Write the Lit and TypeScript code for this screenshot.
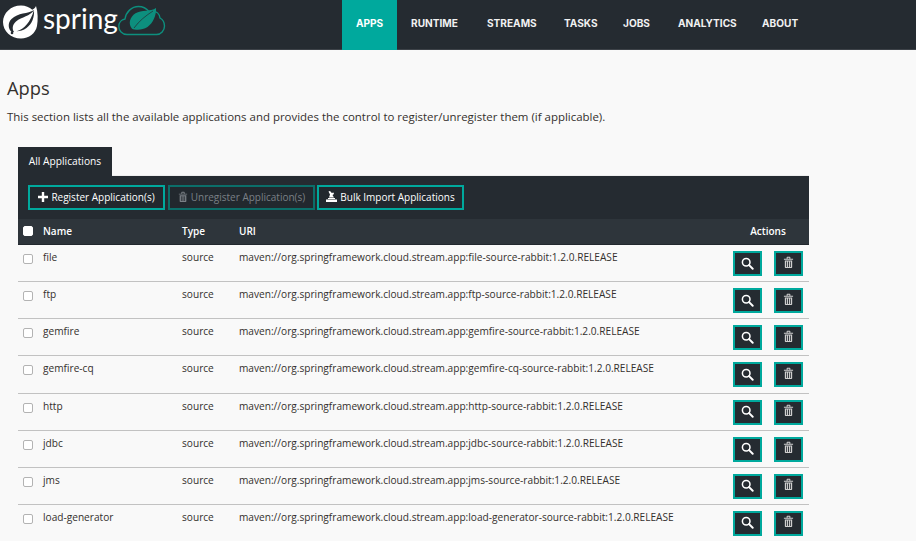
import { LitElement, html, css, svg } from "lit";
import { customElement } from "lit/decorators.js";

const NAV = ["APPS", "RUNTIME", "STREAMS", "TASKS", "JOBS", "ANALYTICS", "ABOUT"];
const ROWS = ["file", "ftp", "gemfire", "gemfire-cq", "http", "jdbc", "jms", "load-generator"];

const trash = svg`<path d="M1 3h10v1.100H1zM4 3V1.400C4 1 4.300.8 4.700.8h2.600c.4 0 .7.2.7.6V3H7V1.800H5V3zM2 4.800h8v7.400c0 .5-.3.8-.8.8H2.800c-.5 0-.8-.3-.8-.8zm1.500 1.200v5.800h.9V6zm2 0v5.800h1V6zm2.100 0v5.800h.9V6z" fill="currentColor" fill-rule="evenodd"/>`;

@customElement("app-root")
export class AppRoot extends LitElement {
  static styles = css`
    :host { display: block; height: 541px; overflow: hidden; background: #f9f9f9; color: #34302d; font-family: "Open Sans", "Noto Sans", sans-serif; }
    header { height: 50px; background: #252b31; display: flex; border-bottom: 1px solid #3d4248; box-sizing: border-box; }
    .logo { width: 342px; display: flex; align-items: flex-start; box-sizing: border-box; flex: none; }
    .logo-mark { flex: none; }
    .logo-text { color: #fff; font: 400 28px/30px "Lato", sans-serif; width: 75px; flex: none; margin-top: 3px; }
    .boot { flex: none; }
    nav { display: flex; gap: 28px; font: 700 10.100px/47px "Inter", sans-serif; color: #f1f1f1; }
    nav a { white-space: nowrap; }
    nav a.on { background: #00a99d; color: #fff; width: 55px; text-align: center; height: 50px; margin-right: -14px; }
    nav a:nth-child(2) { width: 48px; }
    nav a:nth-child(3) { width: 49px; }
    nav a:nth-child(4) { width: 31px; }
    nav a:nth-child(5) { width: 27px; }
    nav a:nth-child(6) { width: 56px; }
    main { padding: 28px 0 0 7px; }
    h1 { margin: 0; font-size: 18.300px; line-height: 20px; font-weight: 400; color: #34302d; }
    .desc { margin: 11px 0 0; font-size: 11.460px; line-height: 16px; color: #34302d; }
    .panel { margin: 22px 0 0 11px; width: 791px; }
    .tab { display: inline-block; width: 94px; height: 29px; background: #252b31; color: #fff; font-size: 10.200px; line-height: 28px; text-align: center; box-sizing: border-box; vertical-align: top; }
    .tabs { height: 29px; border-bottom: 1px solid #eee; box-sizing: border-box; }
    .bar { height: 43px; background: #252b31; display: flex; gap: 3px; padding: 9px 10px 0; box-sizing: border-box; }
    .btn { height: 25px; box-sizing: border-box; border: 2px solid #00a99d; background: #22282e; color: #fff; font-size: 10px; font-family: inherit; display: flex; align-items: center; justify-content: center; gap: 3px; padding: 0 0 2px; white-space: nowrap; }
    .btn.off { border-color: #0b6f6a; color: #7b8086; }
    .b1 { width: 137px; }
    .b2 { width: 147px; }
    .b3 { width: 147px; margin-left: -1px; }
    .row { display: grid; grid-template-columns: 25px 139px 57px 1fr 76px; align-items: start; box-sizing: border-box; }
    .head { height: 26px; background: #2e353b; color: #fff; font-size: 10px; font-weight: 600; line-height: 24px; border-bottom: 1px solid #22282e; }
    .head .act { text-align: center; padding-right: 6px; }
    .body { height: 37.140px; border-bottom: 1px solid #c2c2c2; font-size: 10.150px; line-height: 14px; color: #34302d; padding-top: 5px; }
    .body:last-child { border-bottom: none; }
    .cb { width: 8px; height: 8px; margin: 4px 0 0 5px; border: 1px solid #b3b3b3; border-radius: 2px; background: #fff; box-sizing: content-box; display: block; }
    .head .cb { margin-top: 7px; border-color: #fff; }
    .acts { display: flex; gap: 12px; margin-top: 1px; }
    .ic { width: 29px; height: 25px; box-sizing: border-box; border: 2px solid #00a99d; background: #252b31; display: flex; align-items: center; justify-content: center; color: #fff; padding: 0 0 1px; }
    .ic.del { color: #cfcfcf; padding-bottom: 3px; }
    .ic svg { display: block; }
    .boot-label { font: 700 3.800px "Liberation Sans", sans-serif; letter-spacing: 1.200px; fill: #252b31; }
  `;

  render() {
    return html`
      <header>
        <div class="logo">
          <svg class="logo-mark" width="43" height="42" viewBox="0 0 43 42">
            <path d="M36 6c-.8 1.800-2 3-3.700 3.800C29.500 7.300 25.500 5.500 21 5.500 11 5.500 3 13 3 22s8 16.500 18 16.500c8 0 14.500-5 16-12.500C38 20 38 12 36 6z" fill="#fff"/>
            <path d="M34 10C28 14 18 12.500 11.500 19 7.500 23 8 29 12 32.500l2 -.5C11.800 28.800 12.500 24.500 16 21.500 22 16.500 30 16.500 34 10z" fill="#252b31"/>
            <path d="M34 10c.5 7-2 14-7.500 18-3 2.200-6.500 3.200-10 3.200 8-1.700 14-9.500 17.500-21.200z" fill="#252b31"/>
            <circle cx="12" cy="33" r="1.300" fill="#252b31"/>
          </svg>
          <div class="logo-text">spring</div>
          <svg class="boot" width="48" height="38" viewBox="118 0 48 38">
            <path d="M127 34.500C122 34.500 118.800 30.500 118.800 26.500 118.800 22.500 121.500 19.500 125 19 126 12 131.500 6.500 138.500 6.500 143 6.500 146.500 8.500 149 11.500 150 11.100 151 11 152 11 156.500 11 159.500 14 160 18 162.800 19.500 164.500 22 164.500 26 164.500 30.500 161 34.500 156.500 34.500z" fill="none" stroke="#0d8f7e" stroke-width="1.400"/>
            <path d="M156 8c.5 7.500-3 15-8.500 19-5 3.400-12 3.200-15.500 1.800-4-4.800-2.500-11.500 3.500-15.500 6-3.800 15-1.300 20.500-5.300z" fill="#0d8f7e"/>
            <path d="M134 28C139 21 146 15.500 153 11" stroke="#252b31" stroke-width=".7" fill="none"/>
            <text class="boot-label" x="131" y="32.500">BOOT</text>
          </svg>
        </div>
        <nav>
          ${NAV.map((n, i) => html`<a class=${i === 0 ? "on" : ""}>${n}</a>`)}
        </nav>
      </header>
      <main>
        <h1>Apps</h1>
        <p class="desc">This section lists all the available applications and provides the control to register/unregister them (if applicable).</p>
        <div class="panel">
          <div class="tabs"><span class="tab">All Applications</span></div>
          <div class="bar">
            <button class="btn b1">
              <svg width="10" height="10" viewBox="0 0 10 10"><path d="M3.800 0h2.400v3.800H10v2.400H6.200V10H3.800V6.200H0V3.800h3.800z" fill="currentColor"/></svg>
              Register Application(s)
            </button>
            <button class="btn b2 off">
              <svg width="10" height="12" viewBox="0 0 12 14">${trash}</svg>
              Unregister Application(s)
            </button>
            <button class="btn b3">
              <svg width="11" height="11" viewBox="0 0 11 11"><path d="M0 8.500h11V11H0zM2 7h7v1H2zM2.500 0.500l1.500-.5 1.800 2L7.500 1.500 8 3 6.500 4 8 6.500H3L4 3.500z" fill="currentColor"/></svg>
              Bulk Import Applications
            </button>
          </div>
          <div class="row head">
            <span class="cb"></span>
            <span>Name</span>
            <span>Type</span>
            <span>URI</span>
            <span class="act">Actions</span>
          </div>
          ${ROWS.map((r) => html`
            <div class="row body">
              <span class="cb"></span>
              <span>${r}</span>
              <span>source</span>
              <span>maven://org.springframework.cloud.stream.app:${r}-source-rabbit:1.2.0.RELEASE</span>
              <div class="acts">
                <div class="ic">
                  <svg width="13" height="13" viewBox="0 0 12 12"><circle cx="4.800" cy="4.800" r="3.500" fill="none" stroke="currentColor" stroke-width="1.400"/><path d="M7.500 7.500l3.300 3.300" stroke="currentColor" stroke-width="1.800" stroke-linecap="round"/></svg>
                </div>
                <div class="ic del"><svg width="11" height="13" viewBox="0 0 12 14">${trash}</svg></div>
              </div>
            </div>
          `)}
        </div>
      </main>
    `;
  }
}
